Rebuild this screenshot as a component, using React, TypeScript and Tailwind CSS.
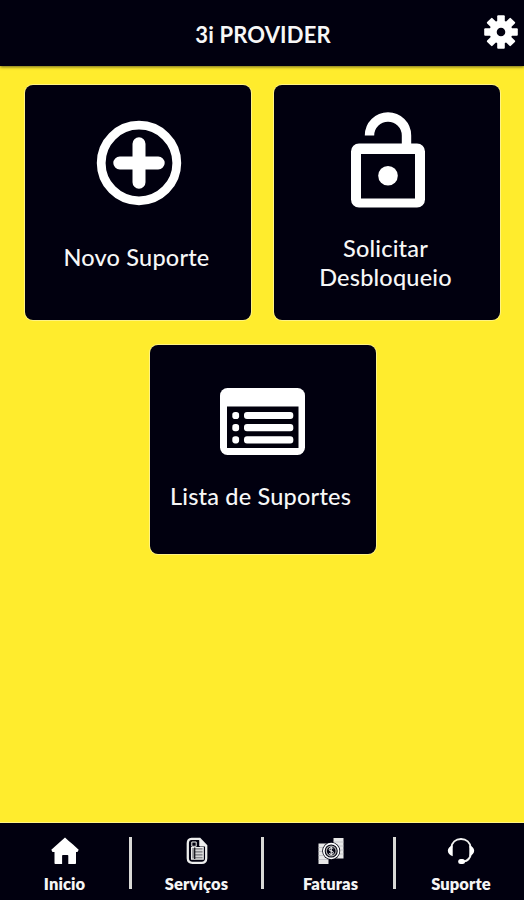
import type { ReactNode } from 'react'

function GearIcon() {
  return (
    <svg viewBox="0 0 34 34" className="size-[34px]" fill="#fff">
      <path
        fillRule="evenodd"
        d="M17 5.5a11.5 11.5 0 1 0 0 23 11.5 11.5 0 0 0 0-23Zm0 7.2a4.3 4.3 0 1 1 0 8.6 4.3 4.3 0 0 1 0-8.6Z"
      />
      {[0, 45, 90, 135, 180, 225, 270, 315].map((angle) => (
        <rect key={angle} x="13.2" y="0.2" width="7.6" height="8.5" rx="1" transform={`rotate(${angle} 17 17)`} />
      ))}
    </svg>
  )
}

function PlusIcon() {
  return (
    <svg viewBox="0 0 86 86" className="size-[86px]" fill="none" stroke="#fff">
      <circle cx="43" cy="43" r="37.8" strokeWidth="8.8" />
      <path d="M43 23.8v38.4M23.8 43h38.4" strokeWidth="13" strokeLinecap="round" />
    </svg>
  )
}

function UnlockIcon() {
  return (
    <svg viewBox="0 0 76 96" className="h-[96px] w-[76px]" fill="#fff">
      <path
        fillRule="evenodd"
        d="M9 31.5h58a8 8 0 0 1 8 8v48a8 8 0 0 1-8 8H9a8 8 0 0 1-8-8v-48a8 8 0 0 1 8-8ZM11 42v44.5h54V42Z"
      />
      <path d="M19.500 23.500a18.500 18.500 0 0 1 37 0V35" fill="none" stroke="#fff" strokeWidth="9.4" />
      <circle cx="38" cy="63.7" r="9.8" />
    </svg>
  )
}

function ListIcon() {
  return (
    <svg viewBox="0 0 85 67" className="h-[67px] w-[85px]" fill="#fff">
      <rect width="85" height="67" rx="7.5" />
      <rect x="7" y="18.5" width="71.5" height="41.5" fill="#01000c" />
      {[27.5, 39.7, 51.8].map((y) => (
        <g key={y}>
          <rect x="12.3" y={y - 3.6} width="6.8" height="7.2" rx="2.8" />
          <rect x="24" y={y - 3.6} width="49.3" height="7.2" rx="3" />
        </g>
      ))}
    </svg>
  )
}

function HomeIcon() {
  return (
    <svg viewBox="0 0 28 28" className="size-7" fill="#fff">
      <path d="M14 .5 17.500 3.800 22 7.500 27.700 12.800 26.500 15H25v11.200q0 .8-.8.800H17.300v-8.200q0-.8-.8-.8h-4.600q-.8 0-.8.800V27H4.300q-.8 0-.8-.8V15H1.500L.300 12.800Z" />
    </svg>
  )
}

function DocumentIcon() {
  return (
    <svg viewBox="0 0 24 28" className="h-7 w-6" fill="none" stroke="#ededed">
      <path d="M6.500 1.800h8.200l6.500 7v12.400q0 4.600-4.600 4.600H7.400q-4.600 0-4.600-4.600V6.300q0-4.500 3.700-4.500Z" strokeWidth="2.3" />
      <path d="M14.800 2v7h6.200Z" fill="#ededed" strokeWidth="1" />
      <path d="M6.800 5h4.400v4.300H6.800Z" strokeWidth="1" />
      <path d="M6.600 10.500h11.600v11.600H6.600Z" fill="#8b8b90" strokeWidth="1.2" />
      <path d="M9.700 10.500v11.600" stroke="#16151d" strokeWidth="1.3" />
      <path d="M10.500 13.300h7.500M10.500 16.300h7.500M10.500 19.300h7.500" strokeWidth="1.1" />
    </svg>
  )
}

function MoneyIcon() {
  return (
    <svg viewBox="0 0 26 28" className="h-7 w-[26px]" fill="none">
      <path d="M15.500 1h10v20.500h-10ZM.500 6.500h10V27H.500Z" fill="#e8e8e8" />
      <path
        d="M15.500 5h10M15.500 9h10M15.500 13h10M15.500 17h10M.500 10.500h10M.500 14.500h10M.500 18.500h10M.500 22.500h10"
        stroke="#b8b8bd"
        strokeWidth=".7"
      />
      <circle cx="13.200" cy="14" r="9" fill="#01000f" />
      <circle cx="13.200" cy="14" r="7.400" stroke="#fff" strokeWidth="1.700" />
      <circle cx="13.200" cy="14" r="4.900" stroke="#aaa" strokeWidth="1.200" />
      <path
        d="M15.300 11.800q-.8-1-2.100-1-2 0-2 1.600t2 1.600q2.100 0 2.100 1.700t-2.100 1.600q-1.400 0-2.200-1M13.200 9.800v8.400"
        stroke="#fff"
      />
    </svg>
  )
}

function HeadsetIcon() {
  return (
    <svg viewBox="0 0 28 28" className="size-7" fill="none" stroke="#f2f2f2">
      <path d="M4.200 11C4.800 5.400 8.700 2 14 2s9.200 3.400 9.800 9" strokeWidth="2" />
      <path d="M24 16.500c-.6 4.200-3.300 7.400-7.500 8.200" strokeWidth="1.8" />
      <path
        d="M5.700 8.200v11Q1 17.500.800 13.700 1 10 5.700 8.200ZM22.300 8.200v11q4.700-1.700 4.900-5.500-.2-3.700-4.900-5.500Z"
        fill="#fff"
        stroke="none"
      />
      <rect x="11.2" y="22" width="6.8" height="5" rx="2.5" fill="#fff" stroke="none" />
    </svg>
  )
}

function Card({ className, children }: { className: string; children: ReactNode }) {
  return (
    <button
      className={`flex w-[226px] flex-col items-center rounded-lg bg-[#01000f] text-[23.5px] leading-[29px] font-medium tracking-[0.2px] text-[#f7f7f7] shadow-[0_0_0_1px_#fff383] ${className}`}
    >
      {children}
    </button>
  )
}

function NavItem({ icon, label, className }: { icon: ReactNode; label: string; className: string }) {
  return (
    <a
      className={`flex flex-col items-center gap-[9px] pt-[13.5px] text-[16.5px] leading-5 font-extrabold tracking-[0.1px] whitespace-nowrap text-[#f5f5f5] ${className}`}
    >
      {icon}
      {label}
    </a>
  )
}

function Divider() {
  return <div className="mt-3.5 h-[52px] w-[3px] shrink-0 bg-[#d9d9d6]" />
}

export default function App() {
  return (
    <div className="flex h-[900px] w-[524px] flex-col bg-[#ffec2d] font-['Lato',sans-serif]">
      <header className="grid h-[66px] shrink-0 grid-cols-[1fr_auto_1fr] items-center bg-[#01000f] pb-0.5 shadow-[0_1px_3px_#6b6420]">
        <div />
        <h1 className="pt-1 pl-0.5 text-[22px] font-bold tracking-[0.15px] text-[#f7f7f7]">3i PROVIDER</h1>
        <button className="mr-1.5 justify-self-end">
          <GearIcon />
        </button>
      </header>

      <main className="flex flex-1 flex-col items-center pt-[18.5px]">
        <div className="flex gap-[23px]">
          <Card className="h-[235.5px] pt-[35px] pl-0.5">
            <PlusIcon />
            <span className="mt-[37px] -ml-1">Novo Suporte</span>
          </Card>
          <Card className="h-[235.5px] pt-[27.5px] pl-0.5">
            <UnlockIcon />
            <span className="mt-[25.500px] -ml-1">
              Solicitar
              <br />
              Desbloqueio
            </span>
          </Card>
        </div>
        <Card className="mt-[25px] ml-px h-[209px] pt-[42.500px]">
          <ListIcon />
          <span className="mt-[27px] -ml-1">Lista de Suportes</span>
        </Card>
      </main>

      <nav className="flex h-[77px] shrink-0 bg-[#01000f] shadow-[0_-1px_0_#fff383]">
        <NavItem className="w-[129px]" icon={<HomeIcon />} label="Inicio" />
        <Divider />
        <NavItem className="w-[129px]" icon={<DocumentIcon />} label="Serviços" />
        <Divider />
        <NavItem className="w-[129px] pl-1" icon={<MoneyIcon />} label="Faturas" />
        <Divider />
        <NavItem className="flex-1 pl-0.5" icon={<HeadsetIcon />} label="Suporte" />
      </nav>
    </div>
  )
}
